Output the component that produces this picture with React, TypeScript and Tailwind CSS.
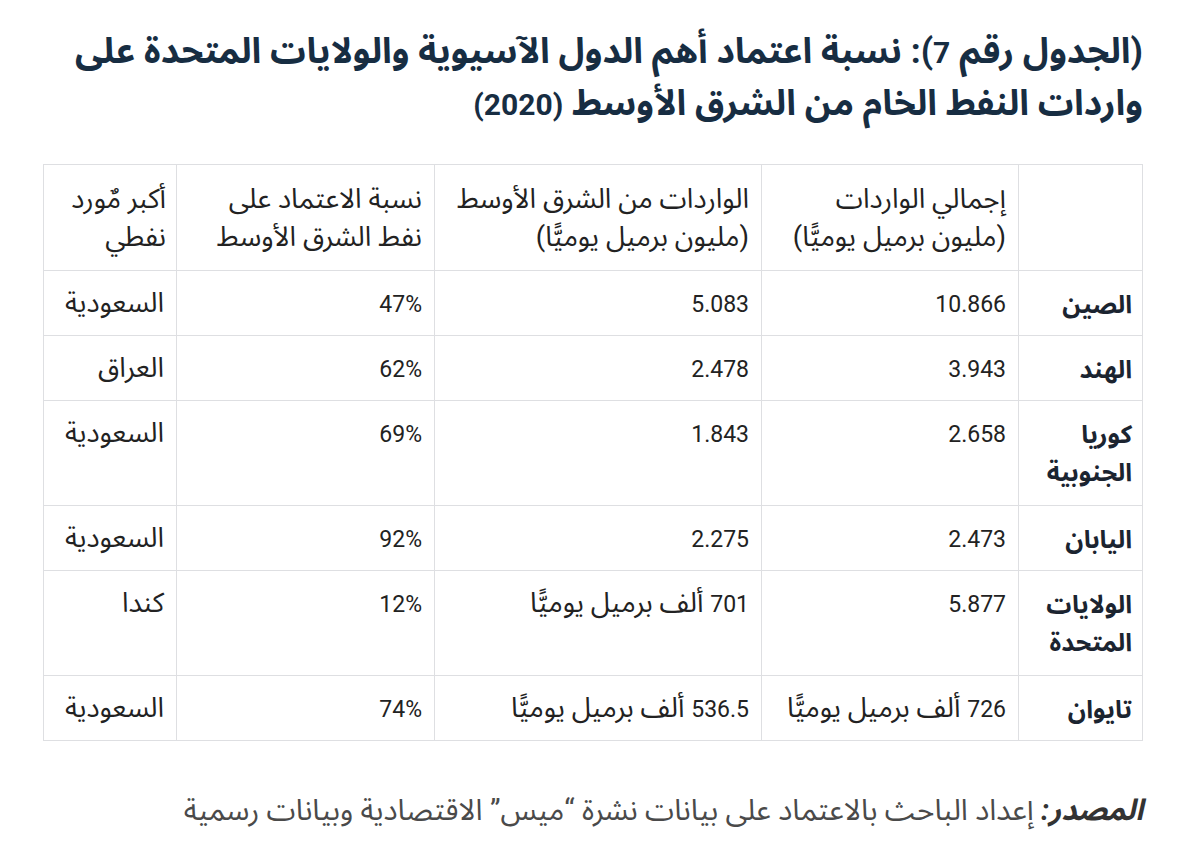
import React from "react";

const rows: { name: string[]; total: string; me: string; pct: string; sup: string }[] = [
  { name: ["الصين"], total: "10.866", me: "5.083", pct: "47%", sup: "السعودية" },
  { name: ["الهند"], total: "3.943", me: "2.478", pct: "62%", sup: "العراق" },
  { name: ["كوريا", "الجنوبية"], total: "2.658", me: "1.843", pct: "69%", sup: "السعودية" },
  { name: ["اليابان"], total: "2.473", me: "2.275", pct: "92%", sup: "السعودية" },
  { name: ["الولايات", "المتحدة"], total: "5.877", me: "701 ألف برميل يوميًّا", pct: "12%", sup: "كندا" },
  { name: ["تايوان"], total: "726 ألف برميل يوميًّا", me: "536.5 ألف برميل يوميًّا", pct: "74%", sup: "السعودية" },
];

const font = { fontFamily: 'Roboto, "Noto Sans Arabic", "DejaVu Sans", sans-serif' };

// Render text with Latin digit runs at a smaller size than the Arabic runs.
function Mixed({ s, num }: { s: string; num: string }) {
  const parts = s.split(/([0-9.%]+)/);
  return (
    <>
      {parts.map((p, i) =>
        /^[0-9.%]+$/.test(p) ? (
          <span key={i} className={num}>
            {p}
          </span>
        ) : (
          <React.Fragment key={i}>{p}</React.Fragment>
        )
      )}
    </>
  );
}

const bd = "border border-[#dedfe2]";
const cell = `${bd} px-[12px] pt-[13px] pb-0 align-top`;

export default function App() {
  return (
    <div dir="rtl" className="w-[1200px] h-[852px] bg-white overflow-hidden" style={font}>
      <div className="pr-[57px] pl-[30px] pt-[26px]">
        <h1 className="text-[35.5px] leading-[51px] font-bold text-[#172d42]">
          (الجدول رقم <span className="text-[30px]">7</span>): نسبة اعتماد أهم الدول الآسيوية والولايات المتحدة على
          <br />
          واردات النفط الخام من الشرق الأوسط <span className="text-[30px]">(2020)</span>
        </h1>
      </div>
      <div className="pr-[57px] pl-[44px] mt-[34px]">
        <table className="border-collapse w-[1099px] table-fixed text-[27.5px] leading-[38px] text-[#222]">
          <colgroup>
            <col className="w-[124px]" />
            <col className="w-[257px]" />
            <col className="w-[327px]" />
            <col className="w-[258px]" />
            <col className="w-[133px]" />
          </colgroup>
          <thead>
            <tr className="h-[106px]">
              <th className={bd}></th>
              <th className={`${bd} px-[12px] text-right align-middle font-normal`}>
                إجمالي الواردات
                <br />
                (مليون برميل يوميًّا)
              </th>
              <th className={`${bd} px-[12px] text-right align-middle font-normal`}>
                الواردات من الشرق الأوسط
                <br />
                (مليون برميل يوميًّا)
              </th>
              <th className={`${bd} px-[12px] text-right align-middle font-normal`}>
                نسبة الاعتماد على
                <br />
                نفط الشرق الأوسط
              </th>
              <th className={`${bd} px-[10px] text-right align-middle font-normal`}>
                أكبر مٌورد
                <br />
                نفطي
              </th>
            </tr>
          </thead>
          <tbody>
            {rows.map((r, i) => (
              <tr key={i} className={r.name.length > 1 ? "h-[105px]" : "h-[65px]"}>
                <td className={`${bd} pr-[10px] pl-2 pt-[15px] pb-0 align-top font-bold text-[25px] text-[#1b2430]`}>
                  {r.name.map((n, j) => (
                    <div key={j}>{n}</div>
                  ))}
                </td>
                <td className={cell}>
                  <Mixed s={r.total} num="text-[23px]" />
                </td>
                <td className={cell}>
                  <Mixed s={r.me} num="text-[23px]" />
                </td>
                <td className={cell}>
                  <span dir="ltr" className="text-[23px]">
                    {r.pct}
                  </span>
                </td>
                <td className={`${cell} px-[10px]`}>{r.sup}</td>
              </tr>
            ))}
          </tbody>
        </table>
      </div>
      <div className="pr-[57px] mt-[50px] text-[29.5px] leading-[38px] text-[#4a4a4a]">
        <span className="font-bold italic text-[#333]">المصدر:</span> إعداد الباحث بالاعتماد على بيانات نشرة “ميس” الاقتصادية وبيانات رسمية
      </div>
    </div>
  );
}
